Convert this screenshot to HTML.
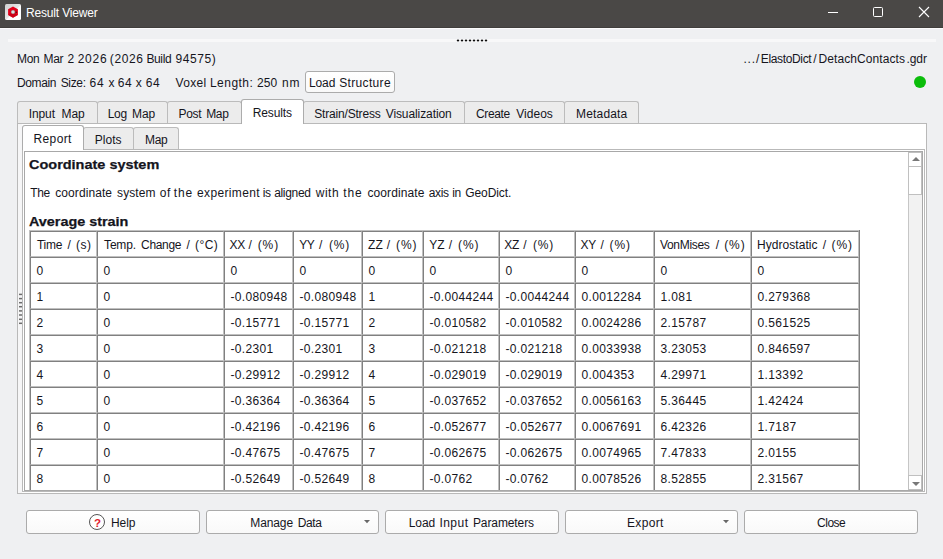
<!DOCTYPE html>
<html><head><meta charset="utf-8"><title>Result Viewer</title><style>
html,body{margin:0;padding:0}
body{width:943px;height:559px;overflow:hidden;background:#eff0f2;position:relative;font-family:"Liberation Sans", sans-serif;}
.a{position:absolute;box-sizing:border-box}
.t{position:absolute;white-space:pre;line-height:16px;font-family:"Liberation Sans", sans-serif;}
.btn{position:absolute;box-sizing:border-box;border:1px solid #ababab;border-radius:3px;background:linear-gradient(#ffffff,#f9f9f9)}
.tab{position:absolute;box-sizing:border-box;border:1px solid #bcbcbc;border-bottom:none;border-radius:3px 3px 0 0;background:#ececec}
.tab.sel{background:#ffffff;border-color:#acacac}
</style></head><body>
<div class="a" style="left:0;top:0;width:943px;height:28px;background:#4a4846;border-bottom:1px solid #403e3c"></div>
<div class="a" style="left:0;top:28px;width:943px;height:1px;background:#fbfbfb"></div>
<svg class="a" style="left:5px;top:4px" width="16" height="16" viewBox="0 0 16 16">
<defs><linearGradient id="ig" x1="0" y1="0" x2="1" y2="1"><stop offset="0" stop-color="#cfcfcf"/><stop offset="0.5" stop-color="#e6e6e6"/><stop offset="0.55" stop-color="#ffffff"/><stop offset="1" stop-color="#ffffff"/></linearGradient>
<radialGradient id="hg" cx="0.5" cy="0.5" r="0.5"><stop offset="0" stop-color="#ffffff"/><stop offset="1" stop-color="#9a9a9a"/></radialGradient></defs>
<rect x="0" y="0" width="16" height="16" rx="1.5" fill="url(#ig)"/>
<polygon points="8,2.4 12.9,5.2 12.9,10.9 8,13.7 3.1,10.9 3.1,5.2" fill="#e2001a"/>
<polygon points="8,8 12.9,10.9 8,13.7 3.1,10.9" fill="#c00015" opacity="0.6"/>
<circle cx="8" cy="8" r="2.1" fill="url(#hg)"/>
<circle cx="11.3" cy="8.3" r="0.8" fill="#4a1212"/>
</svg>
<div class="a" style="left:828px;top:12px;width:10px;height:1px;background:#fff"></div>
<div class="a" style="left:873px;top:7px;width:10px;height:10px;border:1px solid #fff;border-radius:1.5px"></div>
<svg class="a" style="left:918px;top:6px" width="12" height="12" viewBox="0 0 12 12"><path d="M1 1 L11 11 M11 1 L1 11" stroke="#fff" stroke-width="1.1" fill="none"/></svg>
<div class="a" style="left:8px;top:39px;width:928px;height:3px;background:#f8f8f9"></div>
<div class="a" style="left:457px;top:40px;width:2px;height:1px;background:#0c0c0c;box-shadow:1px 0 rgba(0,0,0,.15),-1px 0 rgba(0,0,0,.15),0 1px rgba(0,0,0,.32),0 -1px rgba(0,0,0,.32)"></div>
<div class="a" style="left:461px;top:40px;width:2px;height:1px;background:#0c0c0c;box-shadow:1px 0 rgba(0,0,0,.15),-1px 0 rgba(0,0,0,.15),0 1px rgba(0,0,0,.32),0 -1px rgba(0,0,0,.32)"></div>
<div class="a" style="left:465px;top:40px;width:2px;height:1px;background:#0c0c0c;box-shadow:1px 0 rgba(0,0,0,.15),-1px 0 rgba(0,0,0,.15),0 1px rgba(0,0,0,.32),0 -1px rgba(0,0,0,.32)"></div>
<div class="a" style="left:469px;top:40px;width:2px;height:1px;background:#0c0c0c;box-shadow:1px 0 rgba(0,0,0,.15),-1px 0 rgba(0,0,0,.15),0 1px rgba(0,0,0,.32),0 -1px rgba(0,0,0,.32)"></div>
<div class="a" style="left:473px;top:40px;width:2px;height:1px;background:#0c0c0c;box-shadow:1px 0 rgba(0,0,0,.15),-1px 0 rgba(0,0,0,.15),0 1px rgba(0,0,0,.32),0 -1px rgba(0,0,0,.32)"></div>
<div class="a" style="left:477px;top:40px;width:2px;height:1px;background:#0c0c0c;box-shadow:1px 0 rgba(0,0,0,.15),-1px 0 rgba(0,0,0,.15),0 1px rgba(0,0,0,.32),0 -1px rgba(0,0,0,.32)"></div>
<div class="a" style="left:481px;top:40px;width:2px;height:1px;background:#0c0c0c;box-shadow:1px 0 rgba(0,0,0,.15),-1px 0 rgba(0,0,0,.15),0 1px rgba(0,0,0,.32),0 -1px rgba(0,0,0,.32)"></div>
<div class="a" style="left:485px;top:40px;width:2px;height:1px;background:#0c0c0c;box-shadow:1px 0 rgba(0,0,0,.15),-1px 0 rgba(0,0,0,.15),0 1px rgba(0,0,0,.32),0 -1px rgba(0,0,0,.32)"></div>
<div class="btn" style="left:305px;top:71px;width:90px;height:22px"></div>
<div class="a" style="left:914px;top:76px;width:12px;height:12px;border-radius:6px;background:#0bbd0b"></div>
<div class="a" style="left:17px;top:123px;width:910px;height:371px;border:1px solid #b9b9b9;background:#fff"></div>
<div class="tab" style="left:17px;top:101px;width:81px;height:22px"></div>
<div class="tab" style="left:97px;top:101px;width:71px;height:22px"></div>
<div class="tab" style="left:167px;top:101px;width:75px;height:22px"></div>
<div class="tab" style="left:303px;top:101px;width:162px;height:22px"></div>
<div class="tab" style="left:464px;top:101px;width:101px;height:22px"></div>
<div class="tab" style="left:564px;top:101px;width:75px;height:22px"></div>
<div class="tab sel" style="left:241px;top:99px;width:63px;height:25px"></div>
<div class="a" style="left:22px;top:149px;width:903px;height:343px;border:1px solid #b9b9b9;background:#fff"></div>
<div class="tab" style="left:83px;top:127px;width:51px;height:22px"></div>
<div class="tab" style="left:133px;top:127px;width:46px;height:22px"></div>
<div class="tab sel" style="left:22px;top:125px;width:62px;height:25px"></div>
<div class="a" style="left:18px;top:124px;width:4px;height:369px;background:#f6f6f7"></div>
<svg class="a" style="left:19px;top:290px" width="3" height="40" viewBox="0 0 3 40"><rect x="0" y="3.65" width="3" height="1.5" fill="#6c6c6c"/><rect x="0" y="7.85" width="3" height="1.5" fill="#6c6c6c"/><rect x="0" y="11.95" width="3" height="1.5" fill="#6c6c6c"/><rect x="0" y="15.95" width="3" height="1.5" fill="#6c6c6c"/><rect x="0" y="20.15" width="3" height="1.5" fill="#6c6c6c"/><rect x="0" y="24.25" width="3" height="1.5" fill="#6c6c6c"/><rect x="0" y="28.55" width="3" height="1.5" fill="#6c6c6c"/><rect x="0" y="32.55" width="3" height="1.5" fill="#6c6c6c"/></svg>
<div class="a" style="left:24px;top:151px;width:899px;height:340px;border:1px solid #a8a8a8;background:#fff"></div>
<div class="a" style="left:29px;top:230px;width:831px;height:260px;overflow:hidden"><div class="a" style="left:0;top:0;width:831px;height:1px;background:#c0c0c0"></div><div class="a" style="left:0;top:0;width:1px;height:262px;background:#c0c0c0"></div><div class="a" style="left:830px;top:0;width:1px;height:262px;background:#808080"></div><div class="a" style="left:1px;top:1px;width:67px;height:26px;border:1px solid;border-color:#808080 #c0c0c0 #c0c0c0 #808080"></div><div class="a" style="left:68px;top:1px;width:127px;height:26px;border:1px solid;border-color:#808080 #c0c0c0 #c0c0c0 #808080"></div><div class="a" style="left:195px;top:1px;width:69px;height:26px;border:1px solid;border-color:#808080 #c0c0c0 #c0c0c0 #808080"></div><div class="a" style="left:264px;top:1px;width:69px;height:26px;border:1px solid;border-color:#808080 #c0c0c0 #c0c0c0 #808080"></div><div class="a" style="left:333px;top:1px;width:61px;height:26px;border:1px solid;border-color:#808080 #c0c0c0 #c0c0c0 #808080"></div><div class="a" style="left:394px;top:1px;width:76px;height:26px;border:1px solid;border-color:#808080 #c0c0c0 #c0c0c0 #808080"></div><div class="a" style="left:470px;top:1px;width:76px;height:26px;border:1px solid;border-color:#808080 #c0c0c0 #c0c0c0 #808080"></div><div class="a" style="left:546px;top:1px;width:79px;height:26px;border:1px solid;border-color:#808080 #c0c0c0 #c0c0c0 #808080"></div><div class="a" style="left:625px;top:1px;width:97px;height:26px;border:1px solid;border-color:#808080 #c0c0c0 #c0c0c0 #808080"></div><div class="a" style="left:722px;top:1px;width:108px;height:26px;border:1px solid;border-color:#808080 #c0c0c0 #c0c0c0 #808080"></div><div class="a" style="left:1px;top:27px;width:67px;height:26px;border:1px solid;border-color:#808080 #c0c0c0 #c0c0c0 #808080"></div><div class="a" style="left:68px;top:27px;width:127px;height:26px;border:1px solid;border-color:#808080 #c0c0c0 #c0c0c0 #808080"></div><div class="a" style="left:195px;top:27px;width:69px;height:26px;border:1px solid;border-color:#808080 #c0c0c0 #c0c0c0 #808080"></div><div class="a" style="left:264px;top:27px;width:69px;height:26px;border:1px solid;border-color:#808080 #c0c0c0 #c0c0c0 #808080"></div><div class="a" style="left:333px;top:27px;width:61px;height:26px;border:1px solid;border-color:#808080 #c0c0c0 #c0c0c0 #808080"></div><div class="a" style="left:394px;top:27px;width:76px;height:26px;border:1px solid;border-color:#808080 #c0c0c0 #c0c0c0 #808080"></div><div class="a" style="left:470px;top:27px;width:76px;height:26px;border:1px solid;border-color:#808080 #c0c0c0 #c0c0c0 #808080"></div><div class="a" style="left:546px;top:27px;width:79px;height:26px;border:1px solid;border-color:#808080 #c0c0c0 #c0c0c0 #808080"></div><div class="a" style="left:625px;top:27px;width:97px;height:26px;border:1px solid;border-color:#808080 #c0c0c0 #c0c0c0 #808080"></div><div class="a" style="left:722px;top:27px;width:108px;height:26px;border:1px solid;border-color:#808080 #c0c0c0 #c0c0c0 #808080"></div><div class="a" style="left:1px;top:53px;width:67px;height:26px;border:1px solid;border-color:#808080 #c0c0c0 #c0c0c0 #808080"></div><div class="a" style="left:68px;top:53px;width:127px;height:26px;border:1px solid;border-color:#808080 #c0c0c0 #c0c0c0 #808080"></div><div class="a" style="left:195px;top:53px;width:69px;height:26px;border:1px solid;border-color:#808080 #c0c0c0 #c0c0c0 #808080"></div><div class="a" style="left:264px;top:53px;width:69px;height:26px;border:1px solid;border-color:#808080 #c0c0c0 #c0c0c0 #808080"></div><div class="a" style="left:333px;top:53px;width:61px;height:26px;border:1px solid;border-color:#808080 #c0c0c0 #c0c0c0 #808080"></div><div class="a" style="left:394px;top:53px;width:76px;height:26px;border:1px solid;border-color:#808080 #c0c0c0 #c0c0c0 #808080"></div><div class="a" style="left:470px;top:53px;width:76px;height:26px;border:1px solid;border-color:#808080 #c0c0c0 #c0c0c0 #808080"></div><div class="a" style="left:546px;top:53px;width:79px;height:26px;border:1px solid;border-color:#808080 #c0c0c0 #c0c0c0 #808080"></div><div class="a" style="left:625px;top:53px;width:97px;height:26px;border:1px solid;border-color:#808080 #c0c0c0 #c0c0c0 #808080"></div><div class="a" style="left:722px;top:53px;width:108px;height:26px;border:1px solid;border-color:#808080 #c0c0c0 #c0c0c0 #808080"></div><div class="a" style="left:1px;top:79px;width:67px;height:26px;border:1px solid;border-color:#808080 #c0c0c0 #c0c0c0 #808080"></div><div class="a" style="left:68px;top:79px;width:127px;height:26px;border:1px solid;border-color:#808080 #c0c0c0 #c0c0c0 #808080"></div><div class="a" style="left:195px;top:79px;width:69px;height:26px;border:1px solid;border-color:#808080 #c0c0c0 #c0c0c0 #808080"></div><div class="a" style="left:264px;top:79px;width:69px;height:26px;border:1px solid;border-color:#808080 #c0c0c0 #c0c0c0 #808080"></div><div class="a" style="left:333px;top:79px;width:61px;height:26px;border:1px solid;border-color:#808080 #c0c0c0 #c0c0c0 #808080"></div><div class="a" style="left:394px;top:79px;width:76px;height:26px;border:1px solid;border-color:#808080 #c0c0c0 #c0c0c0 #808080"></div><div class="a" style="left:470px;top:79px;width:76px;height:26px;border:1px solid;border-color:#808080 #c0c0c0 #c0c0c0 #808080"></div><div class="a" style="left:546px;top:79px;width:79px;height:26px;border:1px solid;border-color:#808080 #c0c0c0 #c0c0c0 #808080"></div><div class="a" style="left:625px;top:79px;width:97px;height:26px;border:1px solid;border-color:#808080 #c0c0c0 #c0c0c0 #808080"></div><div class="a" style="left:722px;top:79px;width:108px;height:26px;border:1px solid;border-color:#808080 #c0c0c0 #c0c0c0 #808080"></div><div class="a" style="left:1px;top:105px;width:67px;height:26px;border:1px solid;border-color:#808080 #c0c0c0 #c0c0c0 #808080"></div><div class="a" style="left:68px;top:105px;width:127px;height:26px;border:1px solid;border-color:#808080 #c0c0c0 #c0c0c0 #808080"></div><div class="a" style="left:195px;top:105px;width:69px;height:26px;border:1px solid;border-color:#808080 #c0c0c0 #c0c0c0 #808080"></div><div class="a" style="left:264px;top:105px;width:69px;height:26px;border:1px solid;border-color:#808080 #c0c0c0 #c0c0c0 #808080"></div><div class="a" style="left:333px;top:105px;width:61px;height:26px;border:1px solid;border-color:#808080 #c0c0c0 #c0c0c0 #808080"></div><div class="a" style="left:394px;top:105px;width:76px;height:26px;border:1px solid;border-color:#808080 #c0c0c0 #c0c0c0 #808080"></div><div class="a" style="left:470px;top:105px;width:76px;height:26px;border:1px solid;border-color:#808080 #c0c0c0 #c0c0c0 #808080"></div><div class="a" style="left:546px;top:105px;width:79px;height:26px;border:1px solid;border-color:#808080 #c0c0c0 #c0c0c0 #808080"></div><div class="a" style="left:625px;top:105px;width:97px;height:26px;border:1px solid;border-color:#808080 #c0c0c0 #c0c0c0 #808080"></div><div class="a" style="left:722px;top:105px;width:108px;height:26px;border:1px solid;border-color:#808080 #c0c0c0 #c0c0c0 #808080"></div><div class="a" style="left:1px;top:131px;width:67px;height:26px;border:1px solid;border-color:#808080 #c0c0c0 #c0c0c0 #808080"></div><div class="a" style="left:68px;top:131px;width:127px;height:26px;border:1px solid;border-color:#808080 #c0c0c0 #c0c0c0 #808080"></div><div class="a" style="left:195px;top:131px;width:69px;height:26px;border:1px solid;border-color:#808080 #c0c0c0 #c0c0c0 #808080"></div><div class="a" style="left:264px;top:131px;width:69px;height:26px;border:1px solid;border-color:#808080 #c0c0c0 #c0c0c0 #808080"></div><div class="a" style="left:333px;top:131px;width:61px;height:26px;border:1px solid;border-color:#808080 #c0c0c0 #c0c0c0 #808080"></div><div class="a" style="left:394px;top:131px;width:76px;height:26px;border:1px solid;border-color:#808080 #c0c0c0 #c0c0c0 #808080"></div><div class="a" style="left:470px;top:131px;width:76px;height:26px;border:1px solid;border-color:#808080 #c0c0c0 #c0c0c0 #808080"></div><div class="a" style="left:546px;top:131px;width:79px;height:26px;border:1px solid;border-color:#808080 #c0c0c0 #c0c0c0 #808080"></div><div class="a" style="left:625px;top:131px;width:97px;height:26px;border:1px solid;border-color:#808080 #c0c0c0 #c0c0c0 #808080"></div><div class="a" style="left:722px;top:131px;width:108px;height:26px;border:1px solid;border-color:#808080 #c0c0c0 #c0c0c0 #808080"></div><div class="a" style="left:1px;top:157px;width:67px;height:26px;border:1px solid;border-color:#808080 #c0c0c0 #c0c0c0 #808080"></div><div class="a" style="left:68px;top:157px;width:127px;height:26px;border:1px solid;border-color:#808080 #c0c0c0 #c0c0c0 #808080"></div><div class="a" style="left:195px;top:157px;width:69px;height:26px;border:1px solid;border-color:#808080 #c0c0c0 #c0c0c0 #808080"></div><div class="a" style="left:264px;top:157px;width:69px;height:26px;border:1px solid;border-color:#808080 #c0c0c0 #c0c0c0 #808080"></div><div class="a" style="left:333px;top:157px;width:61px;height:26px;border:1px solid;border-color:#808080 #c0c0c0 #c0c0c0 #808080"></div><div class="a" style="left:394px;top:157px;width:76px;height:26px;border:1px solid;border-color:#808080 #c0c0c0 #c0c0c0 #808080"></div><div class="a" style="left:470px;top:157px;width:76px;height:26px;border:1px solid;border-color:#808080 #c0c0c0 #c0c0c0 #808080"></div><div class="a" style="left:546px;top:157px;width:79px;height:26px;border:1px solid;border-color:#808080 #c0c0c0 #c0c0c0 #808080"></div><div class="a" style="left:625px;top:157px;width:97px;height:26px;border:1px solid;border-color:#808080 #c0c0c0 #c0c0c0 #808080"></div><div class="a" style="left:722px;top:157px;width:108px;height:26px;border:1px solid;border-color:#808080 #c0c0c0 #c0c0c0 #808080"></div><div class="a" style="left:1px;top:183px;width:67px;height:26px;border:1px solid;border-color:#808080 #c0c0c0 #c0c0c0 #808080"></div><div class="a" style="left:68px;top:183px;width:127px;height:26px;border:1px solid;border-color:#808080 #c0c0c0 #c0c0c0 #808080"></div><div class="a" style="left:195px;top:183px;width:69px;height:26px;border:1px solid;border-color:#808080 #c0c0c0 #c0c0c0 #808080"></div><div class="a" style="left:264px;top:183px;width:69px;height:26px;border:1px solid;border-color:#808080 #c0c0c0 #c0c0c0 #808080"></div><div class="a" style="left:333px;top:183px;width:61px;height:26px;border:1px solid;border-color:#808080 #c0c0c0 #c0c0c0 #808080"></div><div class="a" style="left:394px;top:183px;width:76px;height:26px;border:1px solid;border-color:#808080 #c0c0c0 #c0c0c0 #808080"></div><div class="a" style="left:470px;top:183px;width:76px;height:26px;border:1px solid;border-color:#808080 #c0c0c0 #c0c0c0 #808080"></div><div class="a" style="left:546px;top:183px;width:79px;height:26px;border:1px solid;border-color:#808080 #c0c0c0 #c0c0c0 #808080"></div><div class="a" style="left:625px;top:183px;width:97px;height:26px;border:1px solid;border-color:#808080 #c0c0c0 #c0c0c0 #808080"></div><div class="a" style="left:722px;top:183px;width:108px;height:26px;border:1px solid;border-color:#808080 #c0c0c0 #c0c0c0 #808080"></div><div class="a" style="left:1px;top:209px;width:67px;height:26px;border:1px solid;border-color:#808080 #c0c0c0 #c0c0c0 #808080"></div><div class="a" style="left:68px;top:209px;width:127px;height:26px;border:1px solid;border-color:#808080 #c0c0c0 #c0c0c0 #808080"></div><div class="a" style="left:195px;top:209px;width:69px;height:26px;border:1px solid;border-color:#808080 #c0c0c0 #c0c0c0 #808080"></div><div class="a" style="left:264px;top:209px;width:69px;height:26px;border:1px solid;border-color:#808080 #c0c0c0 #c0c0c0 #808080"></div><div class="a" style="left:333px;top:209px;width:61px;height:26px;border:1px solid;border-color:#808080 #c0c0c0 #c0c0c0 #808080"></div><div class="a" style="left:394px;top:209px;width:76px;height:26px;border:1px solid;border-color:#808080 #c0c0c0 #c0c0c0 #808080"></div><div class="a" style="left:470px;top:209px;width:76px;height:26px;border:1px solid;border-color:#808080 #c0c0c0 #c0c0c0 #808080"></div><div class="a" style="left:546px;top:209px;width:79px;height:26px;border:1px solid;border-color:#808080 #c0c0c0 #c0c0c0 #808080"></div><div class="a" style="left:625px;top:209px;width:97px;height:26px;border:1px solid;border-color:#808080 #c0c0c0 #c0c0c0 #808080"></div><div class="a" style="left:722px;top:209px;width:108px;height:26px;border:1px solid;border-color:#808080 #c0c0c0 #c0c0c0 #808080"></div><div class="a" style="left:1px;top:235px;width:67px;height:26px;border:1px solid;border-color:#808080 #c0c0c0 #c0c0c0 #808080"></div><div class="a" style="left:68px;top:235px;width:127px;height:26px;border:1px solid;border-color:#808080 #c0c0c0 #c0c0c0 #808080"></div><div class="a" style="left:195px;top:235px;width:69px;height:26px;border:1px solid;border-color:#808080 #c0c0c0 #c0c0c0 #808080"></div><div class="a" style="left:264px;top:235px;width:69px;height:26px;border:1px solid;border-color:#808080 #c0c0c0 #c0c0c0 #808080"></div><div class="a" style="left:333px;top:235px;width:61px;height:26px;border:1px solid;border-color:#808080 #c0c0c0 #c0c0c0 #808080"></div><div class="a" style="left:394px;top:235px;width:76px;height:26px;border:1px solid;border-color:#808080 #c0c0c0 #c0c0c0 #808080"></div><div class="a" style="left:470px;top:235px;width:76px;height:26px;border:1px solid;border-color:#808080 #c0c0c0 #c0c0c0 #808080"></div><div class="a" style="left:546px;top:235px;width:79px;height:26px;border:1px solid;border-color:#808080 #c0c0c0 #c0c0c0 #808080"></div><div class="a" style="left:625px;top:235px;width:97px;height:26px;border:1px solid;border-color:#808080 #c0c0c0 #c0c0c0 #808080"></div><div class="a" style="left:722px;top:235px;width:108px;height:26px;border:1px solid;border-color:#808080 #c0c0c0 #c0c0c0 #808080"></div></div>
<div class="a" style="left:908px;top:152px;width:14px;height:338px;background:#f2f2f2;border-left:1px solid #c6c6c6"></div>
<div class="a" style="left:908px;top:152px;width:14px;height:15px;background:#fff;border:1px solid #c0c0c0"></div>
<div class="a" style="left:908px;top:166px;width:14px;height:29px;background:#fff;border:1px solid #c0c0c0"></div>
<div class="a" style="left:908px;top:475px;width:14px;height:15px;background:#fff;border:1px solid #c0c0c0"></div>
<svg class="a" style="left:910.6px;top:156px" width="10" height="6" viewBox="0 0 10 6"><polygon points="1,5 9,5 5,1" fill="#787878"/></svg>
<svg class="a" style="left:910.6px;top:480.6px" width="10" height="6" viewBox="0 0 10 6"><polygon points="1,1 9,1 5,5" fill="#787878"/></svg>
<div class="btn" style="left:26px;top:510px;width:174px;height:24px"></div>
<div class="btn" style="left:206px;top:510px;width:173px;height:24px"></div>
<div class="btn" style="left:385px;top:510px;width:174px;height:24px"></div>
<div class="btn" style="left:565px;top:510px;width:173px;height:24px"></div>
<div class="btn" style="left:744px;top:510px;width:174px;height:24px"></div>
<svg class="a" style="left:364px;top:520px" width="6" height="4" viewBox="0 0 6 4"><polygon points="0,0.1 6,0.1 3,3.2" fill="#686868"/></svg>
<svg class="a" style="left:723px;top:520px" width="6" height="4" viewBox="0 0 6 4"><polygon points="0,0.1 6,0.1 3,3.2" fill="#686868"/></svg>
<div class="a" style="left:89px;top:514px;width:16px;height:16px;border:1px solid #555;border-radius:8px;background:#fff"></div>
<span class="t" style="left:94px;top:514.6px;font-size:11.5px;font-weight:700;color:#e3202c">?</span>
<span class="t" style="left:26.0px;top:4.84px;font-size:12px;font-weight:400;color:#ffffff;letter-spacing:-0.17px">Result Viewer</span>
<span class="t" style="left:17.0px;top:50.84px;font-size:12px;font-weight:400;color:#15151d;letter-spacing:-0.35px">Mon</span>
<span class="t" style="left:43.5px;top:50.84px;font-size:12px;font-weight:400;color:#15151d;letter-spacing:-0.35px">Mar</span>
<span class="t" style="left:67.6px;top:50.84px;font-size:12px;font-weight:400;color:#15151d;letter-spacing:0.00px">2</span>
<span class="t" style="left:77.7px;top:50.84px;font-size:12px;font-weight:400;color:#15151d;letter-spacing:0.73px">2026</span>
<span class="t" style="left:109.8px;top:50.84px;font-size:12px;font-weight:400;color:#15151d;letter-spacing:0.60px">(2026</span>
<span class="t" style="left:146.4px;top:50.84px;font-size:12px;font-weight:400;color:#15151d;letter-spacing:-0.35px">Build</span>
<span class="t" style="left:175.5px;top:50.84px;font-size:12px;font-weight:400;color:#15151d;letter-spacing:0.59px">94575)</span>
<span class="t" style="left:16.9px;top:74.84px;font-size:12px;font-weight:400;color:#15151d;letter-spacing:-0.35px">Domain</span>
<span class="t" style="left:60.7px;top:74.84px;font-size:12px;font-weight:400;color:#15151d;letter-spacing:-0.35px">Size:</span>
<span class="t" style="left:89.5px;top:74.84px;font-size:12px;font-weight:400;color:#15151d;letter-spacing:0.84px">64</span>
<span class="t" style="left:108.5px;top:74.84px;font-size:12px;font-weight:400;color:#15151d;letter-spacing:0.00px">x</span>
<span class="t" style="left:117.8px;top:74.84px;font-size:12px;font-weight:400;color:#15151d;letter-spacing:0.44px">64</span>
<span class="t" style="left:135.7px;top:74.84px;font-size:12px;font-weight:400;color:#15151d;letter-spacing:0.00px">x</span>
<span class="t" style="left:145.7px;top:74.84px;font-size:12px;font-weight:400;color:#15151d;letter-spacing:0.74px">64</span>
<span class="t" style="left:175.6px;top:74.84px;font-size:12px;font-weight:400;color:#15151d;letter-spacing:0.29px">Voxel</span>
<span class="t" style="left:209.9px;top:74.84px;font-size:12px;font-weight:400;color:#15151d;letter-spacing:0.49px">Length:</span>
<span class="t" style="left:257.1px;top:74.84px;font-size:12px;font-weight:400;color:#15151d;letter-spacing:-0.02px">250</span>
<span class="t" style="left:281.9px;top:74.84px;font-size:12px;font-weight:400;color:#15151d;letter-spacing:0.83px">nm</span>
<span class="t" style="left:308.9px;top:74.84px;font-size:12px;font-weight:400;color:#15151d;letter-spacing:-0.07px">Load</span>
<span class="t" style="left:339.2px;top:74.84px;font-size:12px;font-weight:400;color:#15151d;letter-spacing:0.34px">Structure</span>
<span class="t" style="left:743.4px;top:50.84px;font-size:12px;font-weight:400;color:#15151d;letter-spacing:0.79px">...</span>
<span class="t" style="left:755.9px;top:50.84px;font-size:12px;font-weight:400;color:#15151d;letter-spacing:0.00px">/</span>
<span class="t" style="left:760.8px;top:50.84px;font-size:12px;font-weight:400;color:#15151d;letter-spacing:-0.35px">ElastoDict</span>
<span class="t" style="left:813.2px;top:50.84px;font-size:12px;font-weight:400;color:#15151d;letter-spacing:0.00px">/</span>
<span class="t" style="left:818.5px;top:50.84px;font-size:12px;font-weight:400;color:#15151d;letter-spacing:0.09px">DetachContacts</span>
<span class="t" style="left:906.5px;top:50.84px;font-size:12px;font-weight:400;color:#15151d;letter-spacing:-0.10px">.gdr</span>
<span class="t" style="left:28.8px;top:105.84px;font-size:12px;font-weight:400;color:#15151d;letter-spacing:-0.13px">Input</span>
<span class="t" style="left:61.5px;top:105.84px;font-size:12px;font-weight:400;color:#15151d;letter-spacing:-0.07px">Map</span>
<span class="t" style="left:107.8px;top:105.84px;font-size:12px;font-weight:400;color:#15151d;letter-spacing:-0.35px">Log</span>
<span class="t" style="left:132.0px;top:105.84px;font-size:12px;font-weight:400;color:#15151d;letter-spacing:-0.12px">Map</span>
<span class="t" style="left:178.6px;top:105.84px;font-size:12px;font-weight:400;color:#15151d;letter-spacing:-0.35px">Post</span>
<span class="t" style="left:206.2px;top:105.84px;font-size:12px;font-weight:400;color:#15151d;letter-spacing:-0.32px">Map</span>
<span class="t" style="left:252.8px;top:104.84px;font-size:12px;font-weight:400;color:#15151d;letter-spacing:-0.15px">Results</span>
<span class="t" style="left:314.3px;top:105.84px;font-size:12px;font-weight:400;color:#15151d;letter-spacing:-0.19px">Strain/Stress</span>
<span class="t" style="left:385.7px;top:105.84px;font-size:12px;font-weight:400;color:#15151d;letter-spacing:-0.09px">Visualization</span>
<span class="t" style="left:476.0px;top:105.84px;font-size:12px;font-weight:400;color:#15151d;letter-spacing:-0.35px">Create</span>
<span class="t" style="left:516.2px;top:105.84px;font-size:12px;font-weight:400;color:#15151d;letter-spacing:0.04px">Videos</span>
<span class="t" style="left:576.0px;top:105.84px;font-size:12px;font-weight:400;color:#15151d;letter-spacing:0.18px">Metadata</span>
<span class="t" style="left:33.6px;top:130.84px;font-size:12px;font-weight:400;color:#15151d;letter-spacing:0.34px">Report</span>
<span class="t" style="left:94.7px;top:131.84px;font-size:12px;font-weight:400;color:#15151d;letter-spacing:0.06px">Plots</span>
<span class="t" style="left:144.9px;top:131.84px;font-size:12px;font-weight:400;color:#15151d;letter-spacing:-0.25px">Map</span>
<span class="t" style="left:111.0px;top:514.84px;font-size:12px;font-weight:400;color:#15151d;letter-spacing:-0.10px">Help</span>
<span class="t" style="left:250.3px;top:514.84px;font-size:12px;font-weight:400;color:#15151d;letter-spacing:-0.11px">Manage</span>
<span class="t" style="left:297.7px;top:514.84px;font-size:12px;font-weight:400;color:#15151d;letter-spacing:-0.35px">Data</span>
<span class="t" style="left:408.8px;top:514.84px;font-size:12px;font-weight:400;color:#15151d;letter-spacing:-0.13px">Load</span>
<span class="t" style="left:439.4px;top:514.84px;font-size:12px;font-weight:400;color:#15151d;letter-spacing:0.47px">Input</span>
<span class="t" style="left:472.9px;top:514.84px;font-size:12px;font-weight:400;color:#15151d;letter-spacing:-0.09px">Parameters</span>
<span class="t" style="left:626.9px;top:514.84px;font-size:12px;font-weight:400;color:#15151d;letter-spacing:0.37px">Export</span>
<span class="t" style="left:817.1px;top:514.84px;font-size:12px;font-weight:400;color:#15151d;letter-spacing:-0.52px">Close</span>
<span class="t" style="left:29.1px;top:157.38px;font-size:13.33px;font-weight:700;color:#15151d;transform:scaleX(1.0858);transform-origin:0 0;-webkit-text-stroke:0.25px #15151d">Coordinate system</span>
<span class="t" style="left:30.2px;top:184.84px;font-size:12px;font-weight:400;color:#15151d;letter-spacing:-0.35px">The</span>
<span class="t" style="left:55.2px;top:184.84px;font-size:12px;font-weight:400;color:#15151d;letter-spacing:0.09px">coordinate</span>
<span class="t" style="left:117.1px;top:184.84px;font-size:12px;font-weight:400;color:#15151d;letter-spacing:0.06px">system</span>
<span class="t" style="left:159.8px;top:184.84px;font-size:12px;font-weight:400;color:#15151d;letter-spacing:0.58px">of</span>
<span class="t" style="left:173.8px;top:184.84px;font-size:12px;font-weight:400;color:#15151d;letter-spacing:0.90px">the</span>
<span class="t" style="left:197.1px;top:184.84px;font-size:12px;font-weight:400;color:#15151d;letter-spacing:0.34px">experiment</span>
<span class="t" style="left:262.8px;top:184.84px;font-size:12px;font-weight:400;color:#15151d;letter-spacing:-0.35px">is</span>
<span class="t" style="left:274.2px;top:184.84px;font-size:12px;font-weight:400;color:#15151d;letter-spacing:-0.33px">aligned</span>
<span class="t" style="left:315.7px;top:184.84px;font-size:12px;font-weight:400;color:#15151d;letter-spacing:0.55px">with</span>
<span class="t" style="left:343.3px;top:184.84px;font-size:12px;font-weight:400;color:#15151d;letter-spacing:0.90px">the</span>
<span class="t" style="left:367.5px;top:184.84px;font-size:12px;font-weight:400;color:#15151d;letter-spacing:0.09px">coordinate</span>
<span class="t" style="left:428.7px;top:184.84px;font-size:12px;font-weight:400;color:#15151d;letter-spacing:-0.35px">axis</span>
<span class="t" style="left:452.3px;top:184.84px;font-size:12px;font-weight:400;color:#15151d;letter-spacing:-0.35px">in</span>
<span class="t" style="left:465.2px;top:184.84px;font-size:12px;font-weight:400;color:#15151d;letter-spacing:-0.08px">GeoDict.</span>
<span class="t" style="left:29.1px;top:214.38px;font-size:13.33px;font-weight:700;color:#15151d;transform:scaleX(1.0792);transform-origin:0 0;-webkit-text-stroke:0.25px #15151d">Average strain</span>
<span class="t" style="left:36.9px;top:236.84px;font-size:12px;font-weight:400;color:#15151d;letter-spacing:-0.24px">Time</span>
<span class="t" style="left:67.5px;top:236.84px;font-size:12px;font-weight:400;color:#15151d;letter-spacing:0.00px">/</span>
<span class="t" style="left:76.1px;top:236.84px;font-size:12px;font-weight:400;color:#15151d;letter-spacing:0.50px">(s)</span>
<span class="t" style="left:104.1px;top:236.84px;font-size:12px;font-weight:400;color:#15151d;letter-spacing:-0.20px">Temp.</span>
<span class="t" style="left:141.1px;top:236.84px;font-size:12px;font-weight:400;color:#15151d;letter-spacing:-0.35px">Change</span>
<span class="t" style="left:186.4px;top:236.84px;font-size:12px;font-weight:400;color:#15151d;letter-spacing:0.00px">/</span>
<span class="t" style="left:195.1px;top:236.84px;font-size:12px;font-weight:400;color:#15151d;letter-spacing:0.38px">(°C)</span>
<span class="t" style="left:229.5px;top:236.84px;font-size:12px;font-weight:400;color:#15151d;letter-spacing:-0.35px">XX</span>
<span class="t" style="left:248.4px;top:236.84px;font-size:12px;font-weight:400;color:#15151d;letter-spacing:0.00px">/</span>
<span class="t" style="left:257.7px;top:236.84px;font-size:12px;font-weight:400;color:#15151d;letter-spacing:0.90px">(%)</span>
<span class="t" style="left:299.2px;top:236.84px;font-size:12px;font-weight:400;color:#15151d;letter-spacing:-0.35px">YY</span>
<span class="t" style="left:319.0px;top:236.84px;font-size:12px;font-weight:400;color:#15151d;letter-spacing:0.00px">/</span>
<span class="t" style="left:328.9px;top:236.84px;font-size:12px;font-weight:400;color:#15151d;letter-spacing:0.90px">(%)</span>
<span class="t" style="left:367.9px;top:236.84px;font-size:12px;font-weight:400;color:#15151d;letter-spacing:0.23px">ZZ</span>
<span class="t" style="left:386.7px;top:236.84px;font-size:12px;font-weight:400;color:#15151d;letter-spacing:0.00px">/</span>
<span class="t" style="left:396.0px;top:236.84px;font-size:12px;font-weight:400;color:#15151d;letter-spacing:0.90px">(%)</span>
<span class="t" style="left:429.3px;top:236.84px;font-size:12px;font-weight:400;color:#15151d;letter-spacing:0.06px">YZ</span>
<span class="t" style="left:448.7px;top:236.84px;font-size:12px;font-weight:400;color:#15151d;letter-spacing:0.00px">/</span>
<span class="t" style="left:458.0px;top:236.84px;font-size:12px;font-weight:400;color:#15151d;letter-spacing:0.90px">(%)</span>
<span class="t" style="left:504.3px;top:236.84px;font-size:12px;font-weight:400;color:#15151d;letter-spacing:-0.35px">XZ</span>
<span class="t" style="left:523.3px;top:236.84px;font-size:12px;font-weight:400;color:#15151d;letter-spacing:0.00px">/</span>
<span class="t" style="left:532.9px;top:236.84px;font-size:12px;font-weight:400;color:#15151d;letter-spacing:0.90px">(%)</span>
<span class="t" style="left:580.6px;top:236.84px;font-size:12px;font-weight:400;color:#15151d;letter-spacing:-0.35px">XY</span>
<span class="t" style="left:600.4px;top:236.84px;font-size:12px;font-weight:400;color:#15151d;letter-spacing:0.00px">/</span>
<span class="t" style="left:609.5px;top:236.84px;font-size:12px;font-weight:400;color:#15151d;letter-spacing:0.90px">(%)</span>
<span class="t" style="left:659.9px;top:236.84px;font-size:12px;font-weight:400;color:#15151d;letter-spacing:-0.30px">VonMises</span>
<span class="t" style="left:715.7px;top:236.84px;font-size:12px;font-weight:400;color:#15151d;letter-spacing:0.00px">/</span>
<span class="t" style="left:724.2px;top:236.84px;font-size:12px;font-weight:400;color:#15151d;letter-spacing:0.90px">(%)</span>
<span class="t" style="left:757.1px;top:236.84px;font-size:12px;font-weight:400;color:#15151d;letter-spacing:0.04px">Hydrostatic</span>
<span class="t" style="left:822.8px;top:236.84px;font-size:12px;font-weight:400;color:#15151d;letter-spacing:0.00px">/</span>
<span class="t" style="left:831.6px;top:236.84px;font-size:12px;font-weight:400;color:#15151d;letter-spacing:0.90px">(%)</span>
<span class="t" style="left:36.5px;top:262.84px;font-size:12px;font-weight:400;color:#15151d;letter-spacing:0.31px">0</span>
<span class="t" style="left:103.5px;top:262.84px;font-size:12px;font-weight:400;color:#15151d;letter-spacing:0.31px">0</span>
<span class="t" style="left:230.5px;top:262.84px;font-size:12px;font-weight:400;color:#15151d;letter-spacing:0.31px">0</span>
<span class="t" style="left:299.5px;top:262.84px;font-size:12px;font-weight:400;color:#15151d;letter-spacing:0.31px">0</span>
<span class="t" style="left:368.5px;top:262.84px;font-size:12px;font-weight:400;color:#15151d;letter-spacing:0.31px">0</span>
<span class="t" style="left:429.5px;top:262.84px;font-size:12px;font-weight:400;color:#15151d;letter-spacing:0.31px">0</span>
<span class="t" style="left:505.5px;top:262.84px;font-size:12px;font-weight:400;color:#15151d;letter-spacing:0.31px">0</span>
<span class="t" style="left:581.5px;top:262.84px;font-size:12px;font-weight:400;color:#15151d;letter-spacing:0.31px">0</span>
<span class="t" style="left:660.5px;top:262.84px;font-size:12px;font-weight:400;color:#15151d;letter-spacing:0.31px">0</span>
<span class="t" style="left:757.5px;top:262.84px;font-size:12px;font-weight:400;color:#15151d;letter-spacing:0.31px">0</span>
<span class="t" style="left:36.5px;top:288.84px;font-size:12px;font-weight:400;color:#15151d;letter-spacing:0.31px">1</span>
<span class="t" style="left:103.5px;top:288.84px;font-size:12px;font-weight:400;color:#15151d;letter-spacing:0.31px">0</span>
<span class="t" style="left:230.5px;top:288.84px;font-size:12px;font-weight:400;color:#15151d;letter-spacing:0.33px">-0.080948</span>
<span class="t" style="left:299.5px;top:288.84px;font-size:12px;font-weight:400;color:#15151d;letter-spacing:0.33px">-0.080948</span>
<span class="t" style="left:368.5px;top:288.84px;font-size:12px;font-weight:400;color:#15151d;letter-spacing:0.31px">1</span>
<span class="t" style="left:429.5px;top:288.84px;font-size:12px;font-weight:400;color:#15151d;letter-spacing:0.33px">-0.0044244</span>
<span class="t" style="left:505.5px;top:288.84px;font-size:12px;font-weight:400;color:#15151d;letter-spacing:0.33px">-0.0044244</span>
<span class="t" style="left:581.5px;top:288.84px;font-size:12px;font-weight:400;color:#15151d;letter-spacing:0.36px">0.0012284</span>
<span class="t" style="left:660.5px;top:288.84px;font-size:12px;font-weight:400;color:#15151d;letter-spacing:0.39px">1.081</span>
<span class="t" style="left:757.5px;top:288.84px;font-size:12px;font-weight:400;color:#15151d;letter-spacing:0.37px">0.279368</span>
<span class="t" style="left:36.5px;top:314.84px;font-size:12px;font-weight:400;color:#15151d;letter-spacing:0.31px">2</span>
<span class="t" style="left:103.5px;top:314.84px;font-size:12px;font-weight:400;color:#15151d;letter-spacing:0.31px">0</span>
<span class="t" style="left:230.5px;top:314.84px;font-size:12px;font-weight:400;color:#15151d;letter-spacing:0.33px">-0.15771</span>
<span class="t" style="left:299.5px;top:314.84px;font-size:12px;font-weight:400;color:#15151d;letter-spacing:0.33px">-0.15771</span>
<span class="t" style="left:368.5px;top:314.84px;font-size:12px;font-weight:400;color:#15151d;letter-spacing:0.31px">2</span>
<span class="t" style="left:429.5px;top:314.84px;font-size:12px;font-weight:400;color:#15151d;letter-spacing:0.33px">-0.010582</span>
<span class="t" style="left:505.5px;top:314.84px;font-size:12px;font-weight:400;color:#15151d;letter-spacing:0.33px">-0.010582</span>
<span class="t" style="left:581.5px;top:314.84px;font-size:12px;font-weight:400;color:#15151d;letter-spacing:0.36px">0.0024286</span>
<span class="t" style="left:660.5px;top:314.84px;font-size:12px;font-weight:400;color:#15151d;letter-spacing:0.37px">2.15787</span>
<span class="t" style="left:757.5px;top:314.84px;font-size:12px;font-weight:400;color:#15151d;letter-spacing:0.37px">0.561525</span>
<span class="t" style="left:36.5px;top:340.84px;font-size:12px;font-weight:400;color:#15151d;letter-spacing:0.31px">3</span>
<span class="t" style="left:103.5px;top:340.84px;font-size:12px;font-weight:400;color:#15151d;letter-spacing:0.31px">0</span>
<span class="t" style="left:230.5px;top:340.84px;font-size:12px;font-weight:400;color:#15151d;letter-spacing:0.33px">-0.2301</span>
<span class="t" style="left:299.5px;top:340.84px;font-size:12px;font-weight:400;color:#15151d;letter-spacing:0.33px">-0.2301</span>
<span class="t" style="left:368.5px;top:340.84px;font-size:12px;font-weight:400;color:#15151d;letter-spacing:0.31px">3</span>
<span class="t" style="left:429.5px;top:340.84px;font-size:12px;font-weight:400;color:#15151d;letter-spacing:0.33px">-0.021218</span>
<span class="t" style="left:505.5px;top:340.84px;font-size:12px;font-weight:400;color:#15151d;letter-spacing:0.33px">-0.021218</span>
<span class="t" style="left:581.5px;top:340.84px;font-size:12px;font-weight:400;color:#15151d;letter-spacing:0.36px">0.0033938</span>
<span class="t" style="left:660.5px;top:340.84px;font-size:12px;font-weight:400;color:#15151d;letter-spacing:0.37px">3.23053</span>
<span class="t" style="left:757.5px;top:340.84px;font-size:12px;font-weight:400;color:#15151d;letter-spacing:0.37px">0.846597</span>
<span class="t" style="left:36.5px;top:366.84px;font-size:12px;font-weight:400;color:#15151d;letter-spacing:0.31px">4</span>
<span class="t" style="left:103.5px;top:366.84px;font-size:12px;font-weight:400;color:#15151d;letter-spacing:0.31px">0</span>
<span class="t" style="left:230.5px;top:366.84px;font-size:12px;font-weight:400;color:#15151d;letter-spacing:0.33px">-0.29912</span>
<span class="t" style="left:299.5px;top:366.84px;font-size:12px;font-weight:400;color:#15151d;letter-spacing:0.33px">-0.29912</span>
<span class="t" style="left:368.5px;top:366.84px;font-size:12px;font-weight:400;color:#15151d;letter-spacing:0.31px">4</span>
<span class="t" style="left:429.5px;top:366.84px;font-size:12px;font-weight:400;color:#15151d;letter-spacing:0.33px">-0.029019</span>
<span class="t" style="left:505.5px;top:366.84px;font-size:12px;font-weight:400;color:#15151d;letter-spacing:0.33px">-0.029019</span>
<span class="t" style="left:581.5px;top:366.84px;font-size:12px;font-weight:400;color:#15151d;letter-spacing:0.37px">0.004353</span>
<span class="t" style="left:660.5px;top:366.84px;font-size:12px;font-weight:400;color:#15151d;letter-spacing:0.37px">4.29971</span>
<span class="t" style="left:757.5px;top:366.84px;font-size:12px;font-weight:400;color:#15151d;letter-spacing:0.37px">1.13392</span>
<span class="t" style="left:36.5px;top:392.84px;font-size:12px;font-weight:400;color:#15151d;letter-spacing:0.31px">5</span>
<span class="t" style="left:103.5px;top:392.84px;font-size:12px;font-weight:400;color:#15151d;letter-spacing:0.31px">0</span>
<span class="t" style="left:230.5px;top:392.84px;font-size:12px;font-weight:400;color:#15151d;letter-spacing:0.33px">-0.36364</span>
<span class="t" style="left:299.5px;top:392.84px;font-size:12px;font-weight:400;color:#15151d;letter-spacing:0.33px">-0.36364</span>
<span class="t" style="left:368.5px;top:392.84px;font-size:12px;font-weight:400;color:#15151d;letter-spacing:0.31px">5</span>
<span class="t" style="left:429.5px;top:392.84px;font-size:12px;font-weight:400;color:#15151d;letter-spacing:0.33px">-0.037652</span>
<span class="t" style="left:505.5px;top:392.84px;font-size:12px;font-weight:400;color:#15151d;letter-spacing:0.33px">-0.037652</span>
<span class="t" style="left:581.5px;top:392.84px;font-size:12px;font-weight:400;color:#15151d;letter-spacing:0.36px">0.0056163</span>
<span class="t" style="left:660.5px;top:392.84px;font-size:12px;font-weight:400;color:#15151d;letter-spacing:0.37px">5.36445</span>
<span class="t" style="left:757.5px;top:392.84px;font-size:12px;font-weight:400;color:#15151d;letter-spacing:0.37px">1.42424</span>
<span class="t" style="left:36.5px;top:418.84px;font-size:12px;font-weight:400;color:#15151d;letter-spacing:0.31px">6</span>
<span class="t" style="left:103.5px;top:418.84px;font-size:12px;font-weight:400;color:#15151d;letter-spacing:0.31px">0</span>
<span class="t" style="left:230.5px;top:418.84px;font-size:12px;font-weight:400;color:#15151d;letter-spacing:0.33px">-0.42196</span>
<span class="t" style="left:299.5px;top:418.84px;font-size:12px;font-weight:400;color:#15151d;letter-spacing:0.33px">-0.42196</span>
<span class="t" style="left:368.5px;top:418.84px;font-size:12px;font-weight:400;color:#15151d;letter-spacing:0.31px">6</span>
<span class="t" style="left:429.5px;top:418.84px;font-size:12px;font-weight:400;color:#15151d;letter-spacing:0.33px">-0.052677</span>
<span class="t" style="left:505.5px;top:418.84px;font-size:12px;font-weight:400;color:#15151d;letter-spacing:0.33px">-0.052677</span>
<span class="t" style="left:581.5px;top:418.84px;font-size:12px;font-weight:400;color:#15151d;letter-spacing:0.36px">0.0067691</span>
<span class="t" style="left:660.5px;top:418.84px;font-size:12px;font-weight:400;color:#15151d;letter-spacing:0.37px">6.42326</span>
<span class="t" style="left:757.5px;top:418.84px;font-size:12px;font-weight:400;color:#15151d;letter-spacing:0.38px">1.7187</span>
<span class="t" style="left:36.5px;top:444.84px;font-size:12px;font-weight:400;color:#15151d;letter-spacing:0.31px">7</span>
<span class="t" style="left:103.5px;top:444.84px;font-size:12px;font-weight:400;color:#15151d;letter-spacing:0.31px">0</span>
<span class="t" style="left:230.5px;top:444.84px;font-size:12px;font-weight:400;color:#15151d;letter-spacing:0.33px">-0.47675</span>
<span class="t" style="left:299.5px;top:444.84px;font-size:12px;font-weight:400;color:#15151d;letter-spacing:0.33px">-0.47675</span>
<span class="t" style="left:368.5px;top:444.84px;font-size:12px;font-weight:400;color:#15151d;letter-spacing:0.31px">7</span>
<span class="t" style="left:429.5px;top:444.84px;font-size:12px;font-weight:400;color:#15151d;letter-spacing:0.33px">-0.062675</span>
<span class="t" style="left:505.5px;top:444.84px;font-size:12px;font-weight:400;color:#15151d;letter-spacing:0.33px">-0.062675</span>
<span class="t" style="left:581.5px;top:444.84px;font-size:12px;font-weight:400;color:#15151d;letter-spacing:0.36px">0.0074965</span>
<span class="t" style="left:660.5px;top:444.84px;font-size:12px;font-weight:400;color:#15151d;letter-spacing:0.37px">7.47833</span>
<span class="t" style="left:757.5px;top:444.84px;font-size:12px;font-weight:400;color:#15151d;letter-spacing:0.38px">2.0155</span>
<span class="t" style="left:36.5px;top:470.84px;font-size:12px;font-weight:400;color:#15151d;letter-spacing:0.31px">8</span>
<span class="t" style="left:103.5px;top:470.84px;font-size:12px;font-weight:400;color:#15151d;letter-spacing:0.31px">0</span>
<span class="t" style="left:230.5px;top:470.84px;font-size:12px;font-weight:400;color:#15151d;letter-spacing:0.33px">-0.52649</span>
<span class="t" style="left:299.5px;top:470.84px;font-size:12px;font-weight:400;color:#15151d;letter-spacing:0.33px">-0.52649</span>
<span class="t" style="left:368.5px;top:470.84px;font-size:12px;font-weight:400;color:#15151d;letter-spacing:0.31px">8</span>
<span class="t" style="left:429.5px;top:470.84px;font-size:12px;font-weight:400;color:#15151d;letter-spacing:0.33px">-0.0762</span>
<span class="t" style="left:505.5px;top:470.84px;font-size:12px;font-weight:400;color:#15151d;letter-spacing:0.33px">-0.0762</span>
<span class="t" style="left:581.5px;top:470.84px;font-size:12px;font-weight:400;color:#15151d;letter-spacing:0.36px">0.0078526</span>
<span class="t" style="left:660.5px;top:470.84px;font-size:12px;font-weight:400;color:#15151d;letter-spacing:0.37px">8.52855</span>
<span class="t" style="left:757.5px;top:470.84px;font-size:12px;font-weight:400;color:#15151d;letter-spacing:0.37px">2.31567</span>
</body></html>
